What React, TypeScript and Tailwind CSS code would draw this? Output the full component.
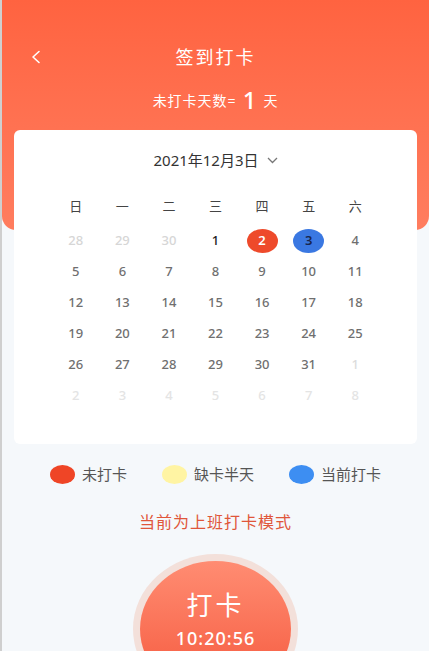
import React from "react";

const weekDays = ["日", "一", "二", "三", "四", "五", "六"];

type Day = { n: number; kind: "prev" | "cur" | "next" };

const buildDays = (): Day[] => {
  const days: Day[] = [];
  [28, 29, 30].forEach((n) => days.push({ n, kind: "prev" }));
  for (let i = 1; i <= 31; i++) days.push({ n: i, kind: "cur" });
  for (let i = 1; i <= 8; i++) days.push({ n: i, kind: "next" });
  return days;
};

const DayCell = ({ day }: { day: Day }) => {
  if (day.kind === "cur" && day.n === 2) {
    return (
      <div className="h-[31px] flex items-center justify-center">
        <span className="w-[31px] h-[24px] rounded-[50%] bg-[#ee4a2b] text-white text-[13px] font-semibold flex items-center justify-center">
          2
        </span>
      </div>
    );
  }
  if (day.kind === "cur" && day.n === 3) {
    return (
      <div className="h-[31px] flex items-center justify-center">
        <span className="w-[31px] h-[24px] rounded-[50%] bg-[#3a78e2] text-[#18264f] text-[13px] font-semibold flex items-center justify-center">
          3
        </span>
      </div>
    );
  }
  let color = "text-[#6f6f6f]";
  if (day.kind === "prev") color = "text-[#d6d6d6]";
  if (day.kind === "next") color = day.n === 1 ? "text-[#dcdcdc]" : "text-[#e4e4e4]";
  if (day.kind === "cur" && day.n === 1) color = "text-[#1e1e1e]";
  return (
    <div className={`h-[31px] flex items-center justify-center text-[13px] font-medium ${color}`}>
      {day.n}
    </div>
  );
};

export default function App() {
  const days = buildDays();

  return (
    <div
      className="relative w-[429px] h-[651px] overflow-hidden bg-[#f5f8fb] border-l-2 border-[#cfcfcf]"
      style={{ fontFamily: '"Noto Sans", "Noto Sans CJK SC", sans-serif' }}
    >
      {/* header */}
      <div className="h-[230px] bg-gradient-to-b from-[#ff6340] to-[#ff7d5f] rounded-b-[14px] pt-[45px] text-white">
        <div className="relative h-[24px] flex items-center justify-center">
          <svg
            className="absolute left-[28px] top-[5px]"
            width="12"
            height="14"
            viewBox="0 0 12 14"
            fill="none"
            stroke="white"
            strokeWidth="1.6"
            strokeLinecap="round"
            strokeLinejoin="round"
          >
            <path d="M9 1.5 3 7l6 5.5" />
          </svg>
          <span className="text-[18px] tracking-[2px] font-normal">签到打卡</span>
        </div>
        <div className="mt-[18px] h-[26px] flex items-center justify-center text-[14px] tracking-[1px]">
          <span>未打卡天数=</span>
          <span className="mx-[6px] text-[24px] font-medium leading-none">1</span>
          <span>天</span>
        </div>
      </div>

      {/* calendar card */}
      <div className="relative -mt-[100px] mx-[12px] bg-white rounded-[6px] pt-[20px] pb-[33px]">
        <div className="h-[20px] flex items-center justify-center gap-[8px] text-[15px] text-[#333]">
          <span>2021年12月3日</span>
          <svg width="11" height="7" viewBox="0 0 11 7" fill="none" stroke="#777" strokeWidth="1.3">
            <path d="M1 1l4.5 4.5L10 1" />
          </svg>
        </div>
        <div className="w-[326px] mx-auto mt-[21px]">
          <div className="grid grid-cols-7 mb-[3px]">
            {weekDays.map((w) => (
              <div key={w} className="h-[31px] flex items-center justify-center text-[13px] text-[#444]">
                {w}
              </div>
            ))}
          </div>
          <div className="grid grid-cols-7">
            {days.map((d, i) => (
              <DayCell key={i} day={d} />
            ))}
          </div>
        </div>
      </div>

      {/* legend */}
      <div className="mt-[19px] flex justify-center gap-[35px] text-[15px] text-[#555]">
        <div className="flex items-center gap-[7px]">
          <span className="w-[25px] h-[19px] rounded-[50%] bg-[#ef4526]" />
          <span>未打卡</span>
        </div>
        <div className="flex items-center gap-[7px]">
          <span className="w-[25px] h-[19px] rounded-[50%] bg-[#fff4a3]" />
          <span>缺卡半天</span>
        </div>
        <div className="flex items-center gap-[7px]">
          <span className="w-[25px] h-[19px] rounded-[50%] bg-[#3d8ef2]" />
          <span>当前打卡</span>
        </div>
      </div>

      <div className="mt-[24px] text-center text-[16px] tracking-[1px] text-[#e0563a]">当前为上班打卡模式</div>

      {/* punch button */}
      <div className="mt-[20px] flex justify-center">
        <div className="w-[165px] h-[150px] rounded-[50%] bg-[#f3e0da] p-[7px]">
          <div className="w-full h-full rounded-[50%] bg-gradient-to-b from-[#ff8c72] to-[#f4553a] flex flex-col items-center pt-[28px] text-white">
            <span className="text-[26px] leading-[32px] tracking-[3px]">打卡</span>
            <span className="mt-[6px] text-[18px] leading-[22px] tracking-[1px] font-medium">10:20:56</span>
          </div>
        </div>
      </div>
    </div>
  );
}
